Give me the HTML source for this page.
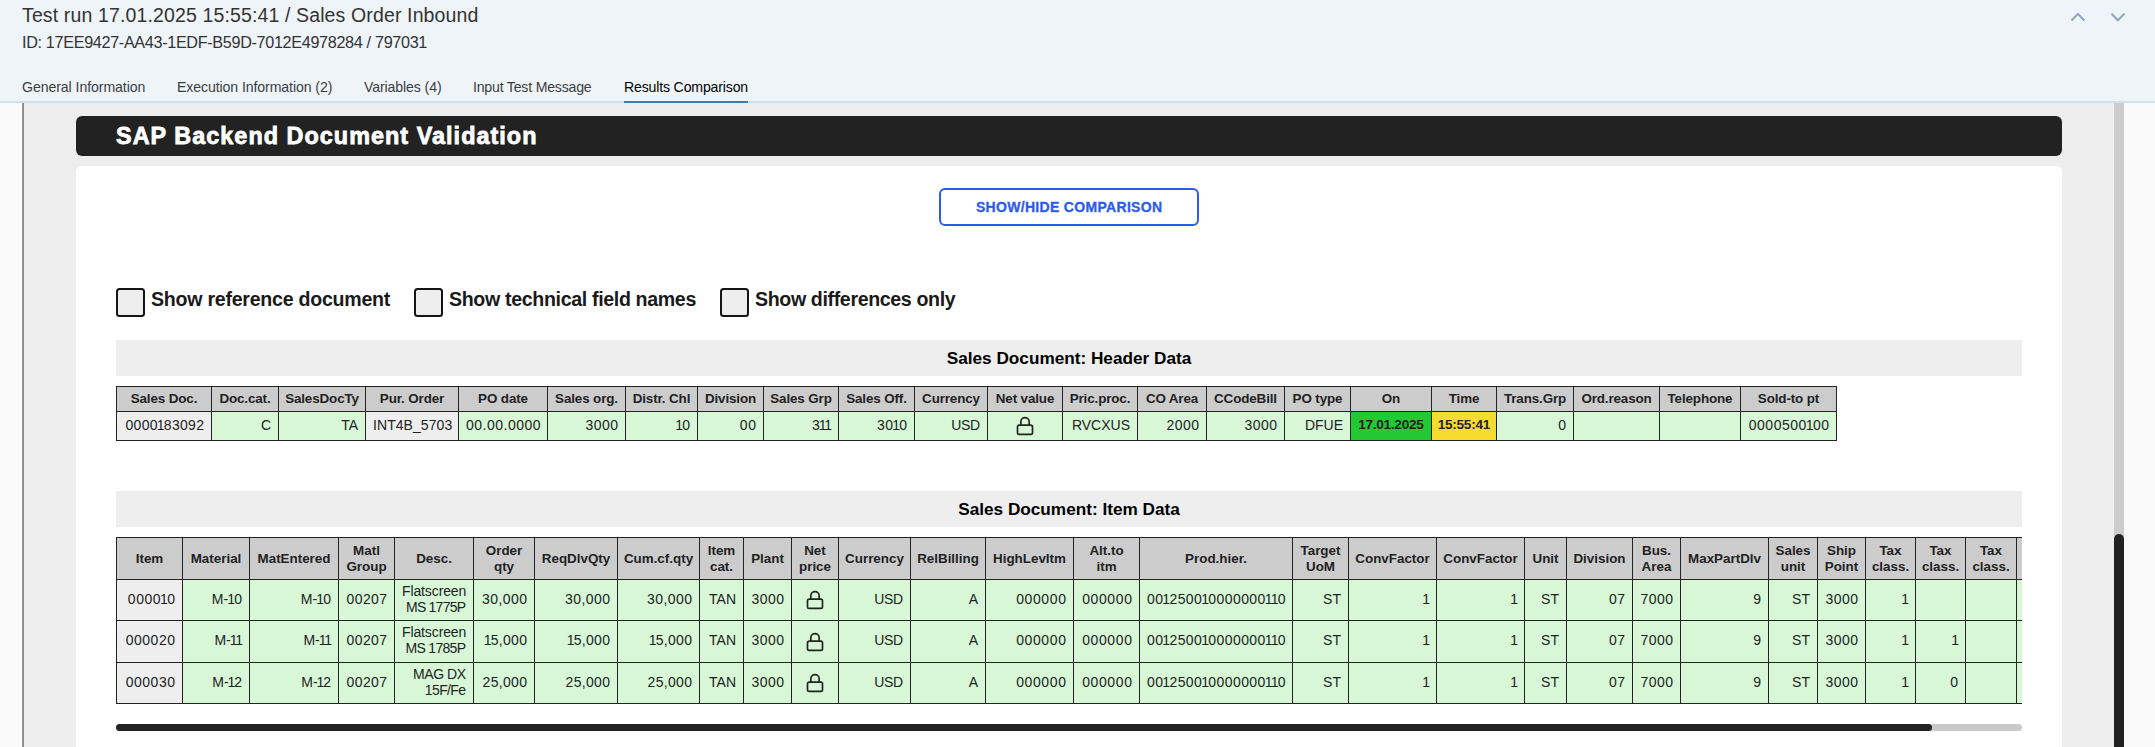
<!DOCTYPE html>
<html lang="en"><head><meta charset="utf-8"><title>Test run 17.01.2025 15:55:41 / Sales Order Inbound</title>
<style>
*{box-sizing:border-box;margin:0;padding:0}
html,body{width:2155px;height:747px;overflow:hidden;background:#fafafa}
body{position:relative;font-family:"Liberation Sans",sans-serif;color:#222;-webkit-font-smoothing:antialiased}
.t{display:inline-block;white-space:nowrap}
/* ---------- Fiori object page header ---------- */
#hdr{position:absolute;left:0;top:0;width:2155px;height:103px;background:#eff4f9;border-bottom:2px solid #d1e0ee}
#title{position:absolute;left:22px;top:3px;font-weight:normal;font-size:19.5px;line-height:24px;color:#333;white-space:nowrap}
#sub{position:absolute;left:22px;top:32px;font-size:16.2px;line-height:20px;color:#333;white-space:nowrap}
#tabs{position:absolute;left:0;top:71px;height:32px;list-style:none;white-space:nowrap}
#tabs li{position:absolute;top:0;height:32px;font-size:14.1px;line-height:32px;color:#3a3d40;white-space:nowrap}
#tabs li.sel{color:#000;border-bottom:2px solid #427cac}
.chev{position:absolute;fill:none;stroke:#8fa8c2;stroke-width:2.1;stroke-linecap:butt;stroke-linejoin:miter}
/* ---------- side areas ---------- */
#lline{position:absolute;left:21px;top:103px;width:3px;height:644px;background:#8f8f8f;border-left:1px solid #fff}
#frame{position:absolute;left:24px;top:103px;width:2090px;height:644px;background:#eee}
#vtrack{position:absolute;left:2114px;top:103px;width:10px;height:644px;background:#ccc}
#vthumb{position:absolute;left:2114px;top:534px;width:10px;height:240px;background:#222;border-radius:5px}
/* ---------- iframe content ---------- */
#banner{position:absolute;left:76px;top:116px;width:1986px;height:40px;background:#222;border-radius:6px;color:#fff;font-weight:bold;font-size:23.4px;line-height:40px;padding-left:40px;white-space:nowrap;-webkit-text-stroke:0.8px #fff}
#card{position:absolute;left:76px;top:166px;width:1986px;height:600px;background:#fff;border-radius:6px 6px 0 0}
#btn{position:absolute;left:863px;top:22px;width:260px;height:38px;border:2px solid #2d5bf0;border-radius:6px;background:#fff;color:#2d5bf0;font:bold 14px/34px "Liberation Sans",sans-serif;text-align:center;text-transform:none;white-space:nowrap;-webkit-text-stroke:0.3px #2d5bf0}
.cb{position:absolute;top:122px;height:29px;white-space:nowrap;font-weight:bold;font-size:19.6px;line-height:24px;color:#1a1a1a}
.cb i{position:absolute;left:0;top:0;width:29px;height:29px;border:2px solid #151515;border-radius:3.5px;background:#eee}
.cb .t{position:absolute;left:35px;top:-1px}
.sec{position:absolute;left:40px;width:1906px;height:36px;background:#eee;text-align:center;font-weight:bold;font-size:17.2px;line-height:36px;color:#000;white-space:nowrap}
table.grid{position:absolute;border-collapse:separate;border-spacing:1px;background:#222;table-layout:fixed;width:auto}
table.grid th,table.grid td{padding:0 7px;overflow:hidden;white-space:nowrap;vertical-align:middle}
table.grid th{background:#ccc;font-weight:bold;font-size:13.4px;line-height:16px;text-align:center;padding:0}
table.grid td{background:#d7f7d7;font-size:14px;line-height:16px;text-align:right}
table.grid td .t{position:relative;top:-1px}
table.grid tr.r1 td .t{top:-2px}
table.grid td .n1{font-weight:inherit;margin:0 -1.1px}
table.grid td.k{background:#eee}
table.grid td.g{background:#22c935;font-weight:bold;font-size:13.6px;text-align:center;padding:0}
table.grid td.y{background:#f7dc30;font-weight:bold;font-size:13.6px;text-align:center;padding:0}
table.grid td.ic{text-align:center;padding:0;line-height:0}
.lock{display:block;margin:0 auto;fill:none;stroke:#222;stroke-width:2;stroke-linecap:round;stroke-linejoin:round;vertical-align:middle}
#wrap2{position:absolute;left:40px;top:371px;width:1906px;height:170px;overflow:hidden}
#wrap2 table.grid{left:0;top:0}
#htrack{position:absolute;left:40px;top:558px;width:1906px;height:7px;border-radius:4px;background:#c9c9c9}
#hthumb{position:absolute;left:0;top:0;width:1816px;height:7px;border-radius:4px;background:#222}
#t1 th{letter-spacing:-0.12px}
</style></head>
<body>
<header id="hdr">
  <h1 id="title"><span class="t" id="h_title" style="letter-spacing:0.132px;margin-right:-0.132px">Test run 17.01.2025 15:55:41 / Sales Order Inbound</span></h1>
  <div id="sub"><span class="t" id="h_sub" style="letter-spacing:-0.33px;margin-right:0.33px">ID: 17EE9427-AA43-1EDF-B59D-7012E4978284 / 797031</span></div>
  <ul id="tabs">
    <li style="left:22px"><span class="t" id="tab0" style="letter-spacing:-0.066px;margin-right:0.066px">General Information</span></li>
    <li style="left:177px"><span class="t" id="tab1" style="letter-spacing:-0.087px;margin-right:0.087px">Execution Information (2)</span></li>
    <li style="left:364px"><span class="t" id="tab2" style="letter-spacing:-0.105px;margin-right:0.105px">Variables (4)</span></li>
    <li style="left:473px"><span class="t" id="tab3" style="letter-spacing:-0.193px;margin-right:0.193px">Input Test Message</span></li>
    <li class="sel" style="left:624px"><span class="t" id="tab4" style="letter-spacing:-0.161px;margin-right:0.161px">Results Comparison</span></li>
  </ul>
  <svg class="chev" style="left:2066px;top:8px" width="64" height="18" viewBox="2066 8 64 18"><path d="M2071.4 20.5 2077.9 14 2084.4 20.5"/><path d="M2111.4 13.7 2117.9 20.2 2124.4 13.7"/></svg>
</header>
<div id="lline"></div>
<div id="frame"></div>
<div id="vtrack"></div>
<div id="vthumb"></div>
<div id="banner"><span class="t" id="banner_t" style="letter-spacing:1.032px;margin-right:-1.032px">SAP Backend Document Validation</span></div>
<main id="card">
  <button id="btn" type="button"><span class="t" id="btn_t" style="letter-spacing:0.315px;margin-right:-0.315px">SHOW/HIDE COMPARISON</span></button>
  <label class="cb" style="left:40px"><i></i><span class="t" id="cb0" style="letter-spacing:-0.26px;margin-right:0.26px">Show reference document</span></label>
  <label class="cb" style="left:338px"><i></i><span class="t" id="cb1" style="letter-spacing:-0.342px;margin-right:0.342px">Show technical field names</span></label>
  <label class="cb" style="left:644px"><i></i><span class="t" id="cb2" style="letter-spacing:-0.365px;margin-right:0.365px">Show differences only</span></label>
  <h2 class="sec" style="top:174px"><span class="t" id="sec0">Sales Document: Header Data</span></h2>
  <table class="grid" id="t1" style="left:40px;top:220px;width:1721px">
<colgroup><col style="width:94px"><col style="width:66px"><col style="width:86px"><col style="width:92px"><col style="width:88px"><col style="width:77px"><col style="width:71px"><col style="width:65px"><col style="width:74px"><col style="width:75px"><col style="width:72px"><col style="width:74px"><col style="width:74px"><col style="width:68px"><col style="width:77px"><col style="width:65px"><col style="width:80px"><col style="width:64px"><col style="width:76px"><col style="width:85px"><col style="width:80px"><col style="width:95px"></colgroup>
<thead><tr style="height:24px"><th><span class="t" id="t1h0">Sales Doc.</span></th><th><span class="t" id="t1h1">Doc.cat.</span></th><th><span class="t" id="t1h2">SalesDocTy</span></th><th><span class="t" id="t1h3">Pur. Order</span></th><th><span class="t" id="t1h4">PO date</span></th><th><span class="t" id="t1h5">Sales org.</span></th><th><span class="t" id="t1h6">Distr. Chl</span></th><th><span class="t" id="t1h7">Division</span></th><th><span class="t" id="t1h8">Sales Grp</span></th><th><span class="t" id="t1h9">Sales Off.</span></th><th><span class="t" id="t1h10">Currency</span></th><th><span class="t" id="t1h11">Net value</span></th><th><span class="t" id="t1h12">Pric.proc.</span></th><th><span class="t" id="t1h13">CO Area</span></th><th><span class="t" id="t1h14">CCodeBill</span></th><th><span class="t" id="t1h15">PO type</span></th><th><span class="t" id="t1h16">On</span></th><th><span class="t" id="t1h17">Time</span></th><th><span class="t" id="t1h18">Trans.Grp</span></th><th><span class="t" id="t1h19">Ord.reason</span></th><th><span class="t" id="t1h20">Telephone</span></th><th><span class="t" id="t1h21">Sold-to pt</span></th></tr></thead>
<tbody><tr style="height:28px"><td class="k"><span class="t" id="t1d0" style="letter-spacing:0.315px;margin-right:-0.315px">0000<span class="n1">1</span>83092</span></td><td class=""><span class="t" id="t1d1">C</span></td><td class=""><span class="t" id="t1d2">TA</span></td><td class="k"><span class="t" id="t1d3" style="letter-spacing:0.063px;margin-right:-0.063px">INT4B_5703</span></td><td class=""><span class="t" id="t1d4" style="letter-spacing:0.504px;margin-right:-0.504px">00.00.0000</span></td><td class=""><span class="t" id="t1d5" style="letter-spacing:0.473px;margin-right:-0.473px">3000</span></td><td class=""><span class="t" id="t1d6" style="letter-spacing:0.315px;margin-right:-0.315px"><span class="n1">1</span>0</span></td><td class=""><span class="t" id="t1d7" style="letter-spacing:0.63px;margin-right:-0.63px">00</span></td><td class=""><span class="t" id="t1d8">3<span class="n1">1</span><span class="n1">1</span></span></td><td class=""><span class="t" id="t1d9" style="letter-spacing:0.315px;margin-right:-0.315px">30<span class="n1">1</span>0</span></td><td class=""><span class="t" id="t1d10" style="letter-spacing:-0.4px;margin-right:0.4px">USD</span></td><td class="ic"><svg class="lock" viewBox="0 0 24 24" width="20" height="20"><rect x="3" y="11" width="18" height="11" rx="2" ry="2"/><path d="M7 11V7a5 5 0 0 1 10 0v4"/></svg></td><td class=""><span class="t" id="t1d12">RVCXUS</span></td><td class=""><span class="t" id="t1d13" style="letter-spacing:0.473px;margin-right:-0.473px">2000</span></td><td class=""><span class="t" id="t1d14" style="letter-spacing:0.473px;margin-right:-0.473px">3000</span></td><td class=""><span class="t" id="t1d15">DFUE</span></td><td class="g"><span class="t" id="t1d16" style="letter-spacing:-0.275px;margin-right:0.275px">17.01.2025</span></td><td class="y"><span class="t" id="t1d17" style="letter-spacing:-0.24px;margin-right:0.24px">15:55:41</span></td><td class=""><span class="t" id="t1d18" style="letter-spacing:0.63px;margin-right:-0.63px">0</span></td><td class=""></td><td class=""></td><td class=""><span class="t" id="t1d21" style="letter-spacing:0.504px;margin-right:-0.504px">0000500<span class="n1">1</span>00</span></td></tr></tbody></table>
  <h2 class="sec" style="top:325px"><span class="t" id="sec1">Sales Document: Item Data</span></h2>
  <div id="wrap2">
  <table class="grid two" id="t2" style="width:1951px">
<colgroup><col style="width:65px"><col style="width:66px"><col style="width:88px"><col style="width:55px"><col style="width:78px"><col style="width:60px"><col style="width:82px"><col style="width:81px"><col style="width:43px"><col style="width:47px"><col style="width:46px"><col style="width:71px"><col style="width:74px"><col style="width:87px"><col style="width:65px"><col style="width:152px"><col style="width:55px"><col style="width:87px"><col style="width:87px"><col style="width:41px"><col style="width:65px"><col style="width:47px"><col style="width:87px"><col style="width:48px"><col style="width:47px"><col style="width:49px"><col style="width:49px"><col style="width:50px"><col style="width:49px"></colgroup>
<thead><tr style="height:41px"><th><span class="t" id="t2h0">Item</span></th><th><span class="t" id="t2h1">Material</span></th><th><span class="t" id="t2h2">MatEntered</span></th><th><span class="t" id="t2h3">Matl<br>Group</span></th><th><span class="t" id="t2h4">Desc.</span></th><th><span class="t" id="t2h5">Order<br>qty</span></th><th><span class="t" id="t2h6">ReqDlvQty</span></th><th><span class="t" id="t2h7">Cum.cf.qty</span></th><th><span class="t" id="t2h8">Item<br>cat.</span></th><th><span class="t" id="t2h9">Plant</span></th><th><span class="t" id="t2h10">Net<br>price</span></th><th><span class="t" id="t2h11">Currency</span></th><th><span class="t" id="t2h12">RelBilling</span></th><th><span class="t" id="t2h13">HighLevItm</span></th><th><span class="t" id="t2h14">Alt.to<br>itm</span></th><th><span class="t" id="t2h15">Prod.hier.</span></th><th><span class="t" id="t2h16">Target<br>UoM</span></th><th><span class="t" id="t2h17">ConvFactor</span></th><th><span class="t" id="t2h18">ConvFactor</span></th><th><span class="t" id="t2h19">Unit</span></th><th><span class="t" id="t2h20">Division</span></th><th><span class="t" id="t2h21">Bus.<br>Area</span></th><th><span class="t" id="t2h22">MaxPartDlv</span></th><th><span class="t" id="t2h23">Sales<br>unit</span></th><th><span class="t" id="t2h24">Ship<br>Point</span></th><th><span class="t" id="t2h25">Tax<br>class.</span></th><th><span class="t" id="t2h26">Tax<br>class.</span></th><th><span class="t" id="t2h27">Tax<br>class.</span></th><th><span class="t" id="t2h28">Tax<br>class.</span></th></tr></thead><tbody>
<tr class="r0" style="height:40px"><td class="k"><span class="t" id="t2r0c0" style="letter-spacing:0.525px;margin-right:-0.525px">0000<span class="n1">1</span>0</span></td><td class=""><span class="t" id="t2r0c1" style="letter-spacing:0.158px;margin-right:-0.158px">M-<span class="n1">1</span>0</span></td><td class=""><span class="t" id="t2r0c2" style="letter-spacing:0.158px;margin-right:-0.158px">M-<span class="n1">1</span>0</span></td><td class=""><span class="t" id="t2r0c3" style="letter-spacing:0.378px;margin-right:-0.378px">00207</span></td><td class=""><span class="t" id="t2r0c4a" style="letter-spacing:-0.116px;margin-right:0.116px">Flatscreen</span><br><span class="t" id="t2r0c4b" style="letter-spacing:-0.772px;margin-right:0.772px">MS 1775P</span></td><td class=""><span class="t" id="t2r0c5" style="letter-spacing:0.42px;margin-right:-0.42px">30,000</span></td><td class=""><span class="t" id="t2r0c6" style="letter-spacing:0.42px;margin-right:-0.42px">30,000</span></td><td class=""><span class="t" id="t2r0c7" style="letter-spacing:0.42px;margin-right:-0.42px">30,000</span></td><td class=""><span class="t" id="t2r0c8">TAN</span></td><td class=""><span class="t" id="t2r0c9" style="letter-spacing:0.473px;margin-right:-0.473px">3000</span></td><td class="ic"><svg class="lock" viewBox="0 0 24 24" width="20" height="20"><rect x="3" y="11" width="18" height="11" rx="2" ry="2"/><path d="M7 11V7a5 5 0 0 1 10 0v4"/></svg></td><td class=""><span class="t" id="t2r0c11" style="letter-spacing:-0.4px;margin-right:0.4px">USD</span></td><td class=""><span class="t" id="t2r0c12">A</span></td><td class=""><span class="t" id="t2r0c13" style="letter-spacing:0.63px;margin-right:-0.63px">000000</span></td><td class=""><span class="t" id="t2r0c14" style="letter-spacing:0.63px;margin-right:-0.63px">000000</span></td><td class=""><span class="t" id="t2r0c15" style="letter-spacing:0.42px;margin-right:-0.42px">00<span class="n1">1</span>2500<span class="n1">1</span>0000000<span class="n1">1</span><span class="n1">1</span>0</span></td><td class=""><span class="t" id="t2r0c16">ST</span></td><td class=""><span class="t" id="t2r0c17"><span class="n1">1</span></span></td><td class=""><span class="t" id="t2r0c18"><span class="n1">1</span></span></td><td class=""><span class="t" id="t2r0c19">ST</span></td><td class=""><span class="t" id="t2r0c20" style="letter-spacing:0.315px;margin-right:-0.315px">07</span></td><td class=""><span class="t" id="t2r0c21" style="letter-spacing:0.473px;margin-right:-0.473px">7000</span></td><td class=""><span class="t" id="t2r0c22">9</span></td><td class=""><span class="t" id="t2r0c23">ST</span></td><td class=""><span class="t" id="t2r0c24" style="letter-spacing:0.473px;margin-right:-0.473px">3000</span></td><td class=""><span class="t" id="t2r0c25"><span class="n1">1</span></span></td><td class=""></td><td class=""></td><td class=""></td></tr>
<tr class="r1" style="height:41px"><td class="k"><span class="t" id="t2r1c0" style="letter-spacing:0.525px;margin-right:-0.525px">000020</span></td><td class=""><span class="t" id="t2r1c1">M-<span class="n1">1</span><span class="n1">1</span></span></td><td class=""><span class="t" id="t2r1c2">M-<span class="n1">1</span><span class="n1">1</span></span></td><td class=""><span class="t" id="t2r1c3" style="letter-spacing:0.378px;margin-right:-0.378px">00207</span></td><td class=""><span class="t" id="t2r1c4a" style="letter-spacing:-0.116px;margin-right:0.116px">Flatscreen</span><br><span class="t" id="t2r1c4b" style="letter-spacing:-0.697px;margin-right:0.697px">MS 1785P</span></td><td class=""><span class="t" id="t2r1c5" style="letter-spacing:0.315px;margin-right:-0.315px"><span class="n1">1</span>5,000</span></td><td class=""><span class="t" id="t2r1c6" style="letter-spacing:0.315px;margin-right:-0.315px"><span class="n1">1</span>5,000</span></td><td class=""><span class="t" id="t2r1c7" style="letter-spacing:0.315px;margin-right:-0.315px"><span class="n1">1</span>5,000</span></td><td class=""><span class="t" id="t2r1c8">TAN</span></td><td class=""><span class="t" id="t2r1c9" style="letter-spacing:0.473px;margin-right:-0.473px">3000</span></td><td class="ic"><svg class="lock" viewBox="0 0 24 24" width="20" height="20"><rect x="3" y="11" width="18" height="11" rx="2" ry="2"/><path d="M7 11V7a5 5 0 0 1 10 0v4"/></svg></td><td class=""><span class="t" id="t2r1c11" style="letter-spacing:-0.4px;margin-right:0.4px">USD</span></td><td class=""><span class="t" id="t2r1c12">A</span></td><td class=""><span class="t" id="t2r1c13" style="letter-spacing:0.63px;margin-right:-0.63px">000000</span></td><td class=""><span class="t" id="t2r1c14" style="letter-spacing:0.63px;margin-right:-0.63px">000000</span></td><td class=""><span class="t" id="t2r1c15" style="letter-spacing:0.42px;margin-right:-0.42px">00<span class="n1">1</span>2500<span class="n1">1</span>0000000<span class="n1">1</span><span class="n1">1</span>0</span></td><td class=""><span class="t" id="t2r1c16">ST</span></td><td class=""><span class="t" id="t2r1c17"><span class="n1">1</span></span></td><td class=""><span class="t" id="t2r1c18"><span class="n1">1</span></span></td><td class=""><span class="t" id="t2r1c19">ST</span></td><td class=""><span class="t" id="t2r1c20" style="letter-spacing:0.315px;margin-right:-0.315px">07</span></td><td class=""><span class="t" id="t2r1c21" style="letter-spacing:0.473px;margin-right:-0.473px">7000</span></td><td class=""><span class="t" id="t2r1c22">9</span></td><td class=""><span class="t" id="t2r1c23">ST</span></td><td class=""><span class="t" id="t2r1c24" style="letter-spacing:0.473px;margin-right:-0.473px">3000</span></td><td class=""><span class="t" id="t2r1c25"><span class="n1">1</span></span></td><td class=""><span class="t" id="t2r1c26"><span class="n1">1</span></span></td><td class=""></td><td class=""></td></tr>
<tr class="r2" style="height:40px"><td class="k"><span class="t" id="t2r2c0" style="letter-spacing:0.525px;margin-right:-0.525px">000030</span></td><td class=""><span class="t" id="t2r2c1">M-<span class="n1">1</span>2</span></td><td class=""><span class="t" id="t2r2c2">M-<span class="n1">1</span>2</span></td><td class=""><span class="t" id="t2r2c3" style="letter-spacing:0.378px;margin-right:-0.378px">00207</span></td><td class=""><span class="t" id="t2r2c4a" style="letter-spacing:-0.456px;margin-right:0.456px">MAG DX</span><br><span class="t" id="t2r2c4b" style="letter-spacing:-0.643px;margin-right:0.643px">15F/Fe</span></td><td class=""><span class="t" id="t2r2c5" style="letter-spacing:0.315px;margin-right:-0.315px">25,000</span></td><td class=""><span class="t" id="t2r2c6" style="letter-spacing:0.315px;margin-right:-0.315px">25,000</span></td><td class=""><span class="t" id="t2r2c7" style="letter-spacing:0.315px;margin-right:-0.315px">25,000</span></td><td class=""><span class="t" id="t2r2c8">TAN</span></td><td class=""><span class="t" id="t2r2c9" style="letter-spacing:0.473px;margin-right:-0.473px">3000</span></td><td class="ic"><svg class="lock" viewBox="0 0 24 24" width="20" height="20"><rect x="3" y="11" width="18" height="11" rx="2" ry="2"/><path d="M7 11V7a5 5 0 0 1 10 0v4"/></svg></td><td class=""><span class="t" id="t2r2c11" style="letter-spacing:-0.4px;margin-right:0.4px">USD</span></td><td class=""><span class="t" id="t2r2c12">A</span></td><td class=""><span class="t" id="t2r2c13" style="letter-spacing:0.63px;margin-right:-0.63px">000000</span></td><td class=""><span class="t" id="t2r2c14" style="letter-spacing:0.63px;margin-right:-0.63px">000000</span></td><td class=""><span class="t" id="t2r2c15" style="letter-spacing:0.42px;margin-right:-0.42px">00<span class="n1">1</span>2500<span class="n1">1</span>0000000<span class="n1">1</span><span class="n1">1</span>0</span></td><td class=""><span class="t" id="t2r2c16">ST</span></td><td class=""><span class="t" id="t2r2c17"><span class="n1">1</span></span></td><td class=""><span class="t" id="t2r2c18"><span class="n1">1</span></span></td><td class=""><span class="t" id="t2r2c19">ST</span></td><td class=""><span class="t" id="t2r2c20" style="letter-spacing:0.315px;margin-right:-0.315px">07</span></td><td class=""><span class="t" id="t2r2c21" style="letter-spacing:0.473px;margin-right:-0.473px">7000</span></td><td class=""><span class="t" id="t2r2c22">9</span></td><td class=""><span class="t" id="t2r2c23">ST</span></td><td class=""><span class="t" id="t2r2c24" style="letter-spacing:0.473px;margin-right:-0.473px">3000</span></td><td class=""><span class="t" id="t2r2c25"><span class="n1">1</span></span></td><td class=""><span class="t" id="t2r2c26" style="letter-spacing:0.63px;margin-right:-0.63px">0</span></td><td class=""></td><td class=""></td></tr>
</tbody></table>
  </div>
  <div id="htrack"><div id="hthumb"></div></div>
</main>

</body></html>
